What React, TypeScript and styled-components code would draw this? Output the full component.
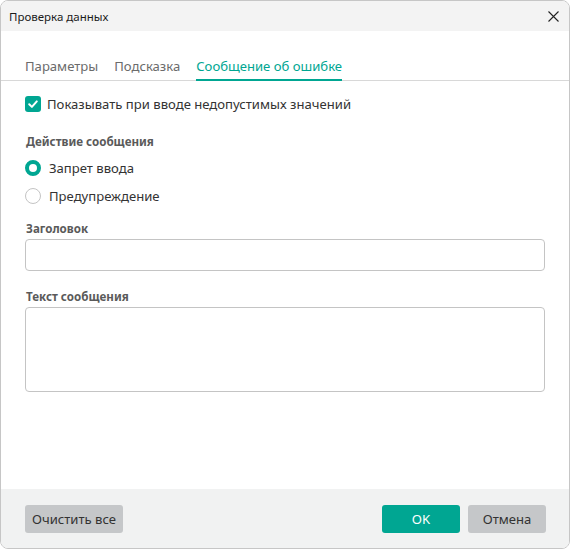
import React, { useState } from "react";
import styled, { createGlobalStyle } from "styled-components";

const TEAL = "#00a692";

const Global = createGlobalStyle`
  html, body { margin: 0; padding: 0; background: #ffffff; }
  * { box-sizing: border-box; }
  body { font-family: "Noto Sans", "Open Sans", sans-serif; color: #333; }
`;

const Window = styled.div`
  width: 570px;
  height: 549px;
  border: 1px solid #c6c6c6;
  border-radius: 8px;
  overflow: hidden;
  display: flex;
  flex-direction: column;
  background: #fff;
`;

const TitleBar = styled.div`
  height: 30px;
  flex: none;
  background: #f3f3f3;
  display: flex;
  align-items: center;
  justify-content: space-between;
  padding: 0 10px 0 8px;
  font-size: 11.5px;
  color: #1b1b1b;
`;

const CloseButton = styled.button`
  border: none;
  background: transparent;
  padding: 0;
  width: 12px;
  height: 12px;
  display: flex;
  align-items: center;
  justify-content: center;
  cursor: pointer;
`;

const Body = styled.div`
  flex: 1;
  display: flex;
  flex-direction: column;
`;

const TabBar = styled.div`
  height: 50px;
  display: flex;
  align-items: flex-end;
  gap: 16px;
  padding: 0 24px;
  border-bottom: 1px solid #d8d8d8;
`;

const Tab = styled.div<{ $active?: boolean }>`
  font-size: 13.1px;
  line-height: 20px;
  padding-bottom: 3px;
  margin-bottom: -1px;
  border-bottom: 2px solid ${(p) => (p.$active ? TEAL : "transparent")};
  color: ${(p) => (p.$active ? TEAL : "#6b6b6b")};
  cursor: pointer;
  white-space: nowrap;
`;

const Content = styled.div`
  padding: 15px 24px 0 24px;
  display: flex;
  flex-direction: column;
`;

const CheckRow = styled.label`
  display: flex;
  align-items: center;
  gap: 6px;
  height: 16px;
  font-size: 13.1px;
  color: #333;
  cursor: pointer;
`;

const CheckBox = styled.span<{ $checked: boolean }>`
  width: 16px;
  height: 16px;
  border-radius: 3px;
  flex: none;
  display: flex;
  align-items: center;
  justify-content: center;
  background: ${(p) => (p.$checked ? TEAL : "#fff")};
  border: ${(p) => (p.$checked ? "none" : "1px solid #bbb")};
`;

const SectionLabel = styled.div<{ $top: number }>`
  margin-top: ${(p) => p.$top}px;
  padding-left: 1px;
  font-size: 11.6px;
  line-height: 16px;
  font-weight: 700;
  color: #5a5a5a;
`;

const RadioRow = styled.label<{ $top: number }>`
  margin-top: ${(p) => p.$top}px;
  display: flex;
  align-items: center;
  gap: 8px;
  height: 16px;
  font-size: 13.1px;
  color: #333;
  cursor: pointer;
`;

const RadioDot = styled.span<{ $checked: boolean }>`
  width: 16px;
  height: 16px;
  border-radius: 50%;
  flex: none;
  background: #fff;
  border: ${(p) => (p.$checked ? `4.5px solid ${TEAL}` : "1px solid #c4c4c4")};
`;

const TextInput = styled.input`
  margin-top: 2px;
  width: 100%;
  height: 32px;
  border: 1px solid #c4c4c4;
  border-radius: 4px;
  padding: 0 8px;
  font-family: inherit;
  font-size: 13px;
  outline: none;
`;

const TextArea = styled.textarea`
  margin-top: 2px;
  width: 100%;
  height: 85px;
  border: 1px solid #c4c4c4;
  border-radius: 4px;
  padding: 6px 8px;
  font-family: inherit;
  font-size: 13px;
  resize: none;
  outline: none;
  display: block;
`;

const Footer = styled.div`
  height: 59px;
  flex: none;
  background: #f1f2f2;
  display: flex;
  align-items: flex-start;
  padding: 16px 23px 0 24px;
  gap: 8px;
`;

const Spacer = styled.div`
  flex: 1;
`;

const Button = styled.button<{ $primary?: boolean; $w: number }>`
  width: ${(p) => p.$w}px;
  height: 28px;
  border: none;
  border-radius: 3px;
  font-family: inherit;
  font-size: 13.1px;
  background: ${(p) => (p.$primary ? TEAL : "#c5c7c9")};
  color: ${(p) => (p.$primary ? "#fff" : "#333")};
  cursor: pointer;
  padding: 0;
`;

export default function App() {
  const [checked, setChecked] = useState(true);
  const [mode, setMode] = useState<"stop" | "warn">("stop");
  return (
    <>
      <Global />
      <Window>
        <TitleBar>
          <span>Проверка данных</span>
          <CloseButton aria-label="Закрыть">
            <svg width="11" height="11" viewBox="0 0 11 11">
              <path d="M0.5 0.5 L10.5 10.5 M10.5 0.5 L0.5 10.5" stroke="#222" strokeWidth="1.1" fill="none" />
            </svg>
          </CloseButton>
        </TitleBar>
        <Body>
          <TabBar>
            <Tab>Параметры</Tab>
            <Tab>Подсказка</Tab>
            <Tab $active>Сообщение об ошибке</Tab>
          </TabBar>
          <Content>
            <CheckRow onClick={() => setChecked(!checked)}>
              <CheckBox $checked={checked}>
                {checked && (
                  <svg width="12" height="12" viewBox="0 0 12 12">
                    <path d="M2.2 6.3 L4.9 8.9 L9.8 3.4" stroke="#fff" strokeWidth="2" fill="none" strokeLinecap="round" strokeLinejoin="round" />
                  </svg>
                )}
              </CheckBox>
              Показывать при вводе недопустимых значений
            </CheckRow>
            <SectionLabel $top={22}>Действие сообщения</SectionLabel>
            <RadioRow $top={10} onClick={() => setMode("stop")}>
              <RadioDot $checked={mode === "stop"} />
              Запрет ввода
            </RadioRow>
            <RadioRow $top={12} onClick={() => setMode("warn")}>
              <RadioDot $checked={mode === "warn"} />
              Предупреждение
            </RadioRow>
            <SectionLabel $top={17}>Заголовок</SectionLabel>
            <TextInput />
            <SectionLabel $top={18}>Текст сообщения</SectionLabel>
            <TextArea />
          </Content>
        </Body>
        <Footer>
          <Button $w={98}>Очистить все</Button>
          <Spacer />
          <Button $primary $w={78}>OK</Button>
          <Button $w={78}>Отмена</Button>
        </Footer>
      </Window>
    </>
  );
}
